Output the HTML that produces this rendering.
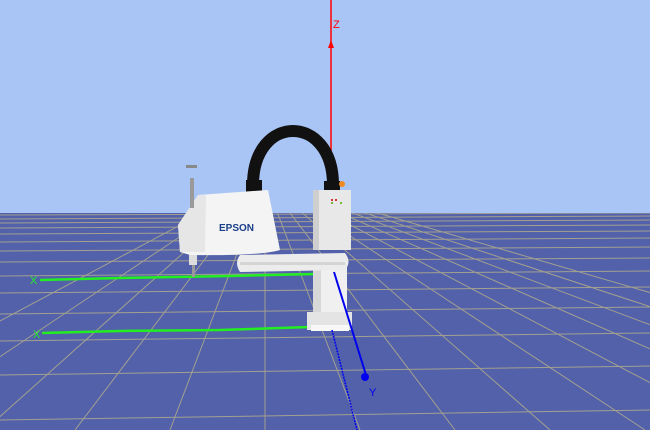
<!DOCTYPE html>
<html><head><style>html,body{margin:0;padding:0;width:650px;height:430px;overflow:hidden;background:#a9c5f5}</style></head><body>
<svg width="650" height="430" viewBox="0 0 650 430" xmlns="http://www.w3.org/2000/svg" font-family="Liberation Sans, sans-serif">
<defs><clipPath id="g"><rect y="213" width="650" height="217"/></clipPath></defs>
<rect width="650" height="213" fill="#a9c5f5"/>
<rect y="213" width="650" height="217" fill="#5261aa"/>
<g stroke="#a3a08f" stroke-width="1" fill="none" clip-path="url(#g)">
<line x1="0" y1="215" x2="650" y2="213"/>
<line x1="0" y1="219" x2="650" y2="216"/>
<line x1="0" y1="223" x2="650" y2="220"/>
<line x1="0" y1="228" x2="650" y2="225"/>
<line x1="0" y1="234" x2="650" y2="231"/>
<line x1="0" y1="242" x2="650" y2="238"/>
<line x1="0" y1="251" x2="650" y2="247"/>
<line x1="0" y1="262" x2="650" y2="258"/>
<line x1="0" y1="276" x2="650" y2="271"/>
<line x1="0" y1="293" x2="650" y2="287"/>
<line x1="0" y1="314" x2="650" y2="307"/>
<line x1="0" y1="341" x2="650" y2="333"/>
<line x1="0" y1="375" x2="650" y2="366"/>
<line x1="0" y1="420" x2="650" y2="410"/>
<line x1="-205" y1="430" x2="265" y2="180"/>
<line x1="-110" y1="430" x2="265" y2="180"/>
<line x1="-15" y1="430" x2="265" y2="180"/>
<line x1="75" y1="430" x2="265" y2="180"/>
<line x1="170" y1="430" x2="265" y2="180"/>
<line x1="265" y1="430" x2="265" y2="213"/>
<line x1="360" y1="430" x2="265" y2="180"/>
<line x1="455" y1="430" x2="265" y2="180"/>
<line x1="550" y1="430" x2="265" y2="180"/>
<line x1="645" y1="430" x2="265" y2="180"/>
<line x1="740" y1="430" x2="265" y2="180"/>
<line x1="835" y1="430" x2="265" y2="180"/>
<line x1="930" y1="430" x2="265" y2="180"/>
<line x1="1025" y1="430" x2="265" y2="180"/>
<line x1="1120" y1="430" x2="265" y2="180"/>
</g>
<line x1="331" y1="0" x2="331" y2="180" stroke="#ff0000" stroke-width="1.5"/>
<polygon points="328,48 334,48 331,40" fill="#ff0000"/>
<text x="333" y="28" font-size="11" fill="#ff0000">Z</text>
<polyline points="40,280 120,278 230,276 315,274" stroke="#22ee22" stroke-width="2.5" fill="none"/>
<polyline points="42,333 120,331 220,330 310,327" stroke="#22ee22" stroke-width="2.5" fill="none"/>
<text x="30" y="284" font-size="11" fill="#22ee22">X</text>
<text x="33" y="338" font-size="11" fill="#22ee22">X</text>
<path d="M253,185 C253,113 333,113 333,185" stroke="#111" stroke-width="12" fill="none"/>
<rect x="246" y="180" width="16" height="14" fill="#111"/>
<rect x="324" y="181" width="16" height="12" fill="#111"/>
<circle cx="342" cy="184" r="3" fill="#ef8a20"/>
<rect x="313" y="266" width="34" height="64" fill="#f0f0f0"/>
<rect x="313" y="266" width="8" height="64" fill="#d8d8d8"/>
<rect x="307" y="312" width="45" height="18" fill="#e4e4e4"/>
<rect x="311" y="325" width="38" height="6" fill="#f8f8f8"/>
<rect x="313" y="190" width="38" height="60" fill="#e8e8e8"/>
<rect x="313" y="190" width="6" height="60" fill="#cfcfcf"/>
<circle cx="332" cy="200" r="1" fill="#c00"/><circle cx="336" cy="200" r="1" fill="#c00"/>
<circle cx="332" cy="203" r="1" fill="#5a0"/><circle cx="341" cy="203" r="1" fill="#5a0"/>
<path d="M240,255 L345,253 Q352,262 345,270 L240,272 Q234,263 240,255Z" fill="#ececec"/>
<rect x="240" y="262" width="105" height="3" fill="#d4d4d4"/>
<path d="M198,195 L268,190 L280,250 Q260,256 190,255 L180,252 L178,225 Z" fill="#f4f4f4"/>
<path d="M178,225 L198,195 L206,195 L205,252 L180,252Z" fill="#e6e6e6"/>
<text x="219" y="231" font-size="10" fill="#1b3e8a" font-weight="bold">EPSON</text>
<rect x="190" y="178" width="4" height="30" fill="#9a9a9a"/>
<rect x="186" y="165" width="11" height="3" fill="#888"/>
<rect x="189" y="255" width="8" height="10" fill="#ddd"/>
<rect x="192" y="265" width="3" height="12" fill="#999"/>
<line x1="334" y1="272" x2="366" y2="375" stroke="#0000ee" stroke-width="2"/>
<circle cx="365" cy="377" r="4" fill="#0000ee"/>
<line x1="332" y1="330" x2="357" y2="430" stroke="#0000ee" stroke-width="1.5" stroke-dasharray="2,1"/>
<text x="369" y="396" font-size="11" fill="#0000ee">Y</text>
</svg>
</body></html>
